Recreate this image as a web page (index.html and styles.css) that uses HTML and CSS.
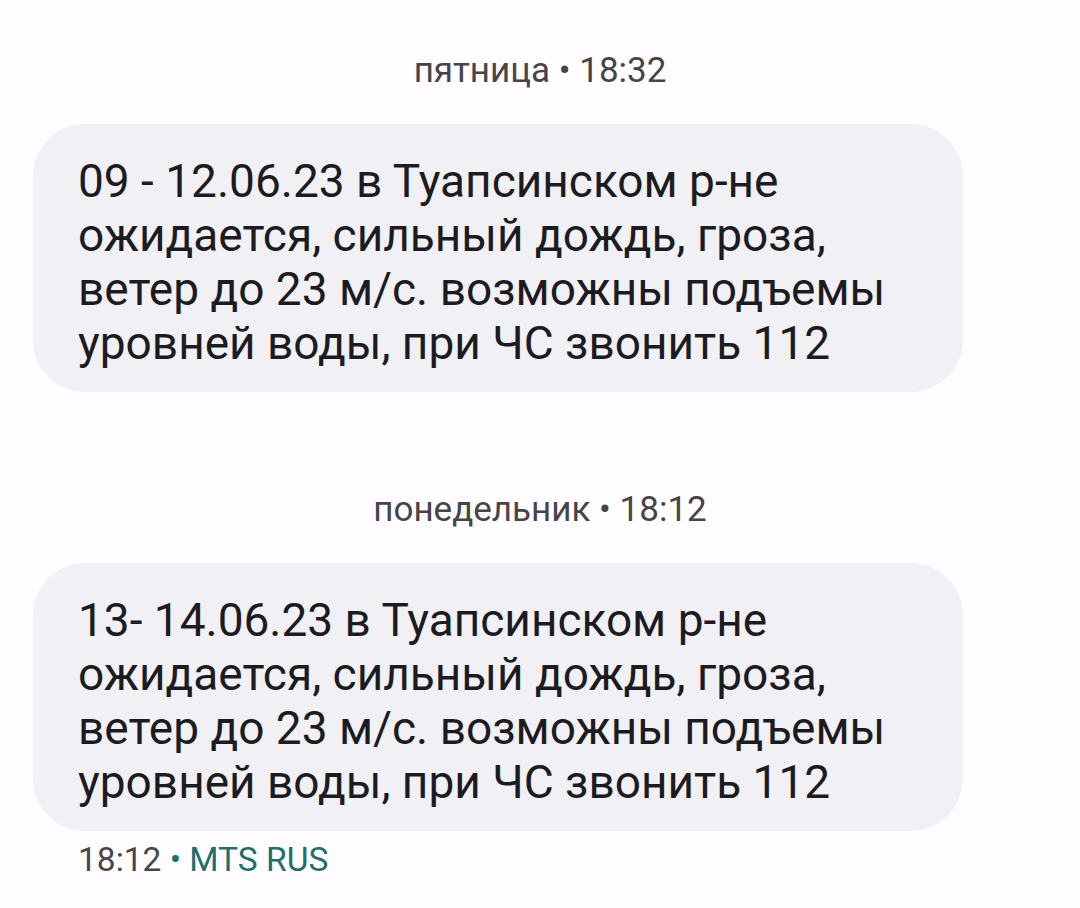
FILE: index.html
```html
<!DOCTYPE html>
<html lang="ru">
<head>
<meta charset="utf-8">
<link rel="stylesheet" href="styles.css">
</head>
<body>
<div class="thread">
  <div class="stamp">пятница • 18:32</div>
  <div class="bubble">09 - 12.06.23 в Туапсинском р-не ожидается, сильный дождь, гроза, ветер до 23 м/с. возможны подъемы уровней воды, при ЧС звонить 112</div>
  <div class="stamp stamp-second">понедельник • 18:12</div>
  <div class="bubble">13- 14.06.23 в Туапсинском р-не ожидается, сильный дождь, гроза, ветер до 23 м/с. возможны подъемы уровней воды, при ЧС звонить 112</div>
  <div class="meta">18:12 <span class="sender">• MTS RUS</span></div>
</div>
</body>
</html>
```
FILE: styles.css
```css
html, body {
  margin: 0;
  padding: 0;
  background: #fffdff;
}
body {
  font-family: Roboto, "Noto Sans", sans-serif;
  width: 1080px;
  height: 908px;
  overflow: hidden;
}
.thread {
  display: flex;
  flex-direction: column;
  padding: 51px 0 0 33px;
}
.stamp {
  align-self: center;
  margin-left: -33px;
  font-size: 35px;
  line-height: 40px;
  color: #46444a;
  margin-bottom: 33px;
}
.stamp-second {
  margin-top: 98px;
}
.bubble {
  width: 930px;
  box-sizing: border-box;
  padding: 30px 40px 22px 45px;
  background: #f1f0f4;
  border-radius: 52px;
  font-size: 46px;
  line-height: 54px;
  color: #1c1b1f;
}
.meta {
  margin: 9px 0 0 45px;
  font-size: 33.5px;
  line-height: 40px;
  color: #48464c;
}
.sender {
  color: #1f6f6e;
}
```
